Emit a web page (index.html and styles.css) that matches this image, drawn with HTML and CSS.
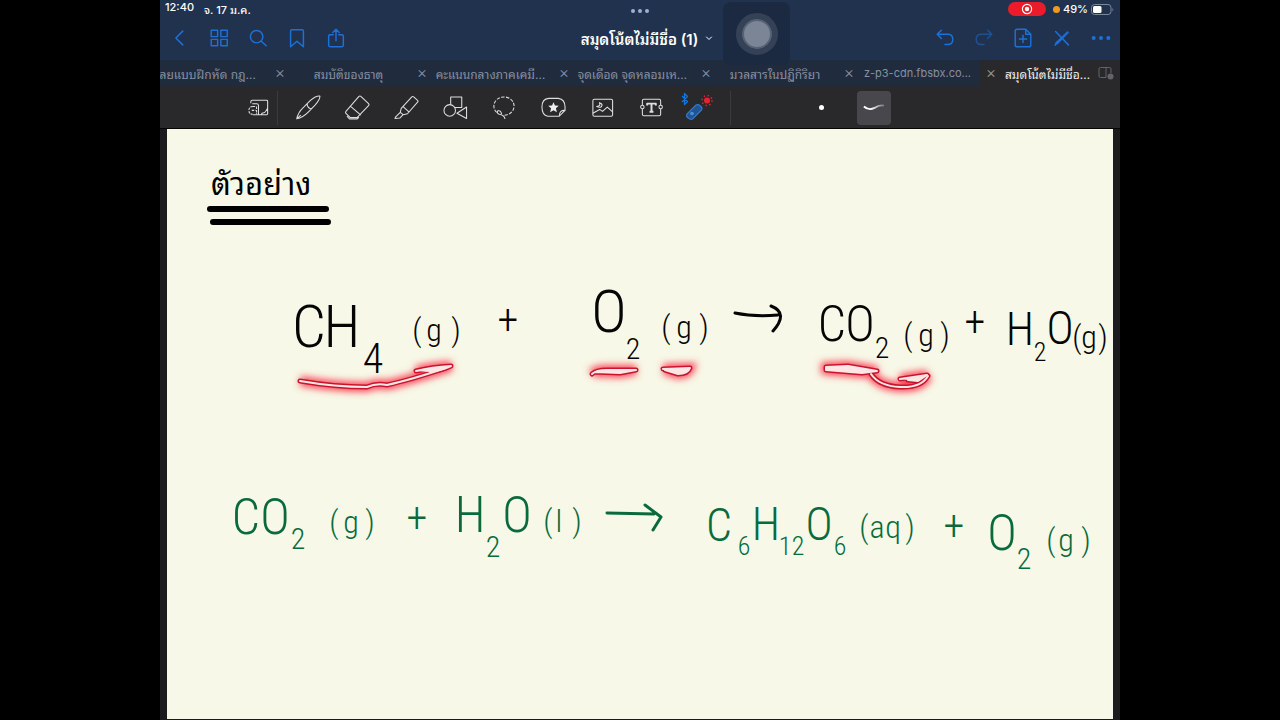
FILE: index.html
```html
<!DOCTYPE html>
<html lang="th">
<head>
<meta charset="utf-8">
<title>สมุดโน้ตไม่มีชื่อ (1)</title>
<link rel="stylesheet" href="styles.css">
</head>
<body>
<div class="app">
  <header class="header">
    <div class="status">
      <div class="status-left"><span>12:40</span><span>จ. 17 ม.ค.</span></div>
      <div class="dots"><i></i><i></i><i></i></div>
      <div class="status-right">
        <span class="rec"><svg width="12" height="12" viewBox="0 0 12 12"><circle cx="6" cy="6" r="4.6" fill="none" stroke="#fff" stroke-width="1.2"/><circle cx="6" cy="6" r="2.2" fill="#fff"/></svg></span>
        <span class="mic"></span><span>49%</span>
        <svg width="23" height="11" viewBox="0 0 23 11"><rect x=".5" y=".5" width="19.5" height="10" rx="3" fill="none" stroke="#7d8797"/><rect x="2" y="2" width="8.5" height="7" rx="1.5" fill="#fff"/><path d="M21.5 3.5q1.5 2 0 4z" fill="#7d8797"/></svg>
      </div>
    </div>
    <nav class="nav">
      <div class="group">
        <button aria-label="Back"><svg viewBox="0 0 24 24"><path d="M15 4.500L7.500 12l7.500 7.500"/></svg></button>
        <button aria-label="Pages"><svg viewBox="0 0 24 24"><path d="M3.500 3.500h7v7h-7zM14 3.500h7v7h-7zM3.500 13.500h7v7h-7zM14 13.500h7v7h-7z"/></svg></button>
        <button aria-label="Search"><svg viewBox="0 0 24 24"><circle cx="10.500" cy="10.500" r="6.800"/><path d="M15.500 15.500l5.500 5"/></svg></button>
        <button aria-label="Bookmark"><svg viewBox="0 0 24 24"><path d="M5 4.500q0-1.500 1.500-1.500h11q1.500 0 1.500 1.500V21.500L12 15.500 5 21.500z"/></svg></button>
        <button aria-label="Share"><svg viewBox="0 0 24 24"><path d="M9 8.500H5.500q-1.500 0-1.500 1.500v10q0 1.500 1.500 1.500h13q1.500 0 1.500-1.500V10q0-1.500-1.500-1.500H15M12 15V2.500M8.500 6L12 2.500 15.500 6"/></svg></button>
      </div>
      <button class="title">สมุดโน้ตไม่มีชื่อ (1)<svg viewBox="0 0 8 8"><path d="M1.500 3L4 5.500 6.500 3"/></svg></button>
      <div class="group right">
        <button aria-label="Undo"><svg viewBox="0 0 24 24"><path d="M8 3.500L3.500 8 8 12.500M3.500 8H15q5.500 0 5.500 5.500T15 19h-3"/></svg></button>
        <button aria-label="Redo" class="dim"><svg viewBox="0 0 24 24"><path d="M16 3.500L20.500 8 16 12.500M20.500 8H9q-5.500 0-5.500 5.500T9 19h3"/></svg></button>
        <button aria-label="Add page"><svg viewBox="0 0 24 24"><path d="M5.500 2.500H15l5.500 5.500v11.500q0 2-2 2h-13q-2 0-2-2v-15q0-2 2-2zM15 2.500V8h5.500M12 9v8M8 13h8"/></svg></button>
        <button aria-label="Pen off"><svg viewBox="0 0 24 24"><path d="M5 5l14 14.500M4.500 20l1.500-3.500"/><path d="M5 19.500l1.500-4L18 4.500l1.500 1.500L8 18z" fill="#1d70d6" stroke-width="0.300"/></svg></button>
        <button aria-label="More"><svg viewBox="0 0 24 24"><g fill="#1d70d6" stroke="none"><circle cx="4" cy="12" r="2.200"/><circle cx="12" cy="12" r="2.200"/><circle cx="20" cy="12" r="2.200"/></g></svg></button>
      </div>
    </nav>
    <div class="touch"><span></span></div>
  </header>

  <div class="tabs">
    <div class="tab first"><span>ลยแบบฝึกหัด กฎ…</span></div>
    <div class="tab"><button aria-label="Close">×</button><span>สมบัติของธาตุ</span></div>
    <div class="tab"><button aria-label="Close">×</button><span>คะแนนกลางภาคเคมี…</span></div>
    <div class="tab"><button aria-label="Close">×</button><span>จุดเดือด จุดหลอมเห…</span></div>
    <div class="tab"><button aria-label="Close">×</button><span>มวลสารในปฏิกิริยา</span></div>
    <div class="tab"><button aria-label="Close">×</button><span class="latin">z-p3-cdn.fbsbx.co...</span></div>
    <div class="tab active"><button aria-label="Close">×</button><span>สมุดโน้ตไม่มีชื่อ…</span>
      <svg class="split" width="16" height="14" viewBox="0 0 16 14"><path d="M8 11.500H2.500q-1.500 0-1.500-1.500V3q0-1.500 1.500-1.500h9Q13 1.500 13 3v4M8 1.500v10" fill="none" stroke="#646468"/><circle cx="12.500" cy="10.500" r="3" fill="#646468"/></svg></div>
  </div>

  <div class="tools">
    <button class="zoom" aria-label="Zoom"><svg viewBox="0 0 26 26"><path d="M5 8.500V7q0-1.500 1.500-1.500h15q1 0 1 1v13q0 1-1 1H7M6.500 9H11q2 0 2 2v9.500M15.500 20.500q1-2 3-2 1.500 0 4-5"/><path d="M7 12q-4 0-4 4t4 4M7 12h3q1 0 1 1v7M6 16h4" stroke-dasharray="2.500 1"/></svg></button>
    <button aria-label="Pen"><svg viewBox="0 0 26 26"><path d="M.8 24.800Q2 18 8 12.500L15 5.500Q21 .5 24.800 1q.5 3.500-5 9.500L13 17.500Q7 23.500.8 24.800zM11.500 9.500q.5 4.500 5 5M.8 24.800L5 21"/></svg></button>
    <button aria-label="Eraser"><svg viewBox="0 0 26 26"><path d="M14.500 1.500q1-1 2 0l8 7.500q1 1 0 2L12.500 23.500H5.500L1 19q-1-1 0-2zM5.500 11.500l11 9.500M2 22l3 3h7.500l2-2"/></svg></button>
    <button aria-label="Highlighter"><svg viewBox="0 0 26 26"><path d="M7.500 14L18.500 2q1-1 2 0l4 3.500q1 1 0 2L14 19.500l-4.500 1-3-2.500zM9.500 12l6 5.500M6.500 18L1.500 23l-.5 1.500 5-.5 3.500-3.500"/></svg></button>
    <button aria-label="Shapes"><svg viewBox="0 0 26 26"><rect x="8" y="2" width="11.500" height="11"/><circle cx="7" cy="16" r="6" fill="#29292b"/><path d="M24.500 12.500v12L14.500 19z" fill="#29292b"/></svg></button>
    <button aria-label="Lasso"><svg viewBox="0 0 26 26"><path d="M13 21A10.500 9.500 0 1 0 6 19" stroke-dasharray="3.500 1.500"/><path d="M13.500 25q-.5-4-6-5-3-1.500-1.500-3.500 3-1 4 3.500"/></svg></button>
    <button aria-label="Elements"><svg viewBox="0 0 26 26"><path d="M19 22H7Q1 21 1 12.500T8 3.500h10q7 1 7 9V16q-6-.5-6 6l6-6"/><path d="M13 7.500l1.500 3.500 4 .3-3 2.600 1 4-3.500-2.100-3.500 2.100 1-4-3-2.600 4-.3z" fill="#eee" stroke="none"/></svg></button>
    <button aria-label="Image"><svg viewBox="0 0 26 26"><rect x="3" y="4.500" width="20.500" height="17.500" rx="1.500"/><path d="M3 19l7-4 3 2 5-4.500 5.500 5M9.500 8q2.500 3-2.500 4 5 2 5.500-1.500 0-2-3-2.500"/></svg></button>
    <button aria-label="Text"><svg viewBox="0 0 26 26"><path d="M3.500 10.500V6q0-1.500 1.500-1.500h16q1.500 0 1.500 1.500v4.500m0 4V20q0 1.500-1.500 1.500H5q-1.500 0-1.500-1.500v-5.500"/><circle cx="3.500" cy="12.500" r="1.800"/><circle cx="22.500" cy="12.500" r="1.800"/><path d="M8.500 11V9h9v2M13 9v8.500M11 17.500h4" stroke-width="2"/></svg></button>
    <button class="laser" aria-label="Laser pointer"><svg viewBox="0 0 36 32"><path d="M3 4l5.500 5.500-3 3v-11l3 3-5.500 5.500" stroke="#1772e8" stroke-width="1.300"/><path d="M8 22l9-9q2-1 4.500 1t1 4l-9 9q-2 1-4.500-1t-1-4z" fill="#205493" stroke="#3579c6"/><circle cx="13" cy="21.500" r="1.800" fill="#4a90e0" stroke="none"/><circle cx="28" cy="8.500" r="3" fill="#e6222d" stroke="none"/><circle cx="28" cy="8.500" r="5" stroke="#e6222d" stroke-width="1.600" stroke-dasharray="1.300 2.630"/></svg></button>
    <button class="dot" aria-label="Point"><i></i></button>
    <button class="trail" aria-label="Trail"><svg viewBox="0 0 26 26"><defs><linearGradient id="fade"><stop offset=".35" stop-color="#fff"/><stop offset="1" stop-color="#77777b"/></linearGradient></defs><path d="M2 12q5 4.500 11 1.500 5-3.500 10-2.500" stroke="url(#fade)" stroke-width="2"/></svg></button>
  </div>

  <main class="desk">
    <svg class="page" viewBox="167 129 946 590" role="img" aria-label="ตัวอย่าง">
      <defs><filter id="glow" x="-20%" y="-150%" width="140%" height="400%"><feGaussianBlur stdDeviation="3.500"/></filter>
      <g id="marks">
        <path d="M300 381Q335 387 367 387 376 383 387 385 410 380 446 368"/>
        <path class="blob" d="M416 371Q432 367 451 366 445 369 430 372"/>
        <path class="blob" d="M592 374Q596 370 607 370L636 370 620 373 595 372"/>
        <path class="blob" d="M663 369L690 368Q688 374 678 374L665 370"/>
        <path class="blob" d="M826 367L848 366 877 371 862 373 826 370z"/>
        <path d="M871 374Q879 386 900 387T928 376"/>
        <path class="blob" d="M900 379L927 375 918 381 908 380"/>
      </g></defs>
      <text class="heading" x="211" y="195">ตัวอย่าง</text>
      <path class="rule" d="M210 209H326M213 222H328"/>
      <g class="glow" filter="url(#glow)"><use href="#marks"/></g>
      <use href="#marks" class="edge"/><use href="#marks" class="core"/>
      <g class="black">
        <text><tspan class="cap big" x="309 342" y="347">CH</tspan><tspan class="sub big-sub" x="373" y="373">4</tspan><tspan class="state" x="417 434 456" y="341">(g)</tspan><tspan class="plus" x="508" y="334">+</tspan></text>
        <text><tspan class="cap big" x="609" y="332">O</tspan><tspan class="sub" x="633" y="359">2</tspan><tspan class="state" x="666 684 704" y="338">(g)</tspan></text>
        <path d="M735 313Q754 317 778 315M771 306Q789 313 773 331"/>
        <text><tspan class="cap" x="832 860" y="341">CO</tspan><tspan class="sub" x="882" y="358">2</tspan><tspan class="state" x="908 926 945" y="346">(g)</tspan><tspan class="plus" x="975" y="336">+</tspan></text>
        <text><tspan class="cap tight" x="1020" y="345">H</tspan><tspan class="sub small" x="1040" y="361">2</tspan><tspan class="cap tight" x="1060" y="344">O</tspan><tspan class="state" x="1077 1089 1103" y="348">(g)</tspan></text>
      </g>
      <g class="green">
        <text><tspan class="cap" x="246 275" y="534">CO</tspan><tspan class="sub" x="298" y="549">2</tspan><tspan class="state" x="334 351 370" y="533">(g)</tspan><tspan class="plus" x="417" y="532">+</tspan></text>
        <text><tspan class="cap" x="470" y="532">H</tspan><tspan class="sub" x="493" y="557">2</tspan><tspan class="cap" x="517" y="532">O</tspan><tspan class="state" x="548 559 577" y="532">(l)</tspan></text>
        <path d="M607 513L654 514M645 505L661 517 653 530"/>
        <text><tspan class="cap tight" x="719" y="541">C</tspan><tspan class="sub small" x="744" y="555">6</tspan><tspan class="cap tight" x="766" y="540">H</tspan><tspan class="sub small" x="785 798" y="555">12</tspan><tspan class="cap tight" x="819" y="540">O</tspan><tspan class="sub small" x="840" y="555">6</tspan><tspan class="state" x="864 877 893 910" y="538">(aq)</tspan><tspan class="plus" x="954" y="540">+</tspan></text>
        <text><tspan class="cap" x="1002" y="550">O</tspan><tspan class="sub" x="1024" y="569">2</tspan><tspan class="state" x="1051 1066 1086" y="551">(g)</tspan></text>
      </g>
    </svg>
  </main>
</div>
</body>
</html>
```
FILE: styles.css
```css
* { box-sizing: border-box; }
body { margin: 0; background: #000; font-family: Inter, "Noto Sans Thai Looped", Loma, Garuda, Waree, "Noto Sans Thai", "Noto Sans", sans-serif; color: #fff; }
button { background: none; border: 0; padding: 0; margin: 0; font: inherit; color: inherit; display: flex; align-items: center; justify-content: center; }
svg { flex: none; }
.app { width: 75%; min-height: 100vh; margin: 0 auto; background: #1b1b1e; overflow: hidden; }
.header { position: relative; background: #21324f; }
.status { display: grid; grid-template-columns: 1fr auto 1fr; align-items: center; height: 18px; padding: 0 6px 0 5px; font-size: 11px; font-weight: 500; }
.status-left { display: flex; gap: 10px; }
.status-right { display: flex; justify-content: flex-end; align-items: center; gap: 3px; }
.rec { display: flex; align-items: center; justify-content: center; width: 38px; height: 14px; border-radius: 7px; background: #ea1c2b; margin-right: 4px; }
.mic { width: 7px; height: 7px; border-radius: 50%; background: #f09a1d; }
.dots { display: flex; gap: 3px; padding-top: 4px; }
.dots i { width: 4px; height: 4px; border-radius: 50%; background: #9eb0cd; }
.nav { display: grid; grid-template-columns: 1fr auto 1fr; align-items: center; height: 42px; padding-bottom: 3px; }
.group { display: flex; }
.group.right { justify-content: flex-end; }
.group button { width: 39px; height: 36px; }
.nav svg { width: 22px; height: 22px; fill: none; stroke: #1d70d6; stroke-width: 1.6; stroke-linejoin: round; stroke-linecap: round; }
.dim { opacity: .5; }
.nav .title { gap: 7px; padding-left: 14px; font-size: 15px; font-weight: 600; white-space: nowrap; }
.nav .title svg { width: 8px; height: 8px; stroke: #fff; stroke-width: 1; }
.touch { position: absolute; top: 2px; left: 563px; width: 67px; height: 63px; border-radius: 8px; background: #1c2a41; display: flex; align-items: center; justify-content: center; z-index: 1; }
.touch span { width: 42px; height: 42px; border-radius: 50%; border: 6px solid #344157; background: #7b8596; background-clip: padding-box; box-shadow: inset 0 0 0 2px #556175; }
.tabs { display: grid; grid-template-columns: 109fr 142fr 142fr 142fr 143fr 142fr 140fr; height: 26px; background: #202b3e; color: #8690a1; font-size: 12px; }
.tab { position: relative; display: flex; align-items: center; padding-left: 5px; overflow: hidden; white-space: nowrap; }
.tab span { flex: 1; text-align: center; }
.tab .latin { font-size: 11px; }
.tab button { width: 12px; height: 16px; font-size: 16px; font-weight: 300; padding-bottom: 2px; }
.tab.first { padding: 0; justify-content: flex-end; padding-right: 13px; }
.tab.first span { flex: none; }
.tab.active { background: #29292b; color: #f2f2f2; padding-right: 6px; }
.tab.active button { color: #999; }
.tools { display: flex; align-items: center; height: 43px; padding: 1px 0 0 80px; background: #29292b; border-bottom: 1px solid #050505; }
.tools button { width: 49px; height: 34px; }
.tools svg { width: 25px; height: 25px; fill: none; stroke: #dededf; stroke-width: 1.1; stroke-linejoin: round; }
.tools .zoom { width: 38px; margin-right: 6px; border-right: 1px solid #3b3b3e; }
.tools .laser { width: 55px; padding-right: 12px; border-right: 1px solid #3b3b3e; }
.tools .laser svg { width: 36px; height: 32px; }
.tools .dot { margin-left: 66px; }
.tools .dot i { width: 5px; height: 5px; border-radius: 50%; background: #fff; }
.tools .trail { width: 34px; margin-left: 11px; border-radius: 4px; background: #48484c; }
.desk { padding: 0 7px; }
.page { display: block; width: 100%; background: #f7f8e7; overflow: hidden; }
.page text { font-family: "Roboto Condensed", Roboto, "Liberation Sans Narrow", sans-serif; font-weight: 300; text-anchor: middle; }
.page .heading { font-family: "Noto Sans Thai Looped", Loma, Garuda, Waree, "Noto Sans Thai", sans-serif; font-size: 31px; font-weight: 400; text-anchor: start; }
.rule { stroke: #000; stroke-width: 6; stroke-linecap: round; }
.cap { font-size: 50px; }
.cap.big { font-size: 60px; }
.cap.tight { font-size: 46px; }
.sub { font-size: 30px; }
.sub.big-sub { font-size: 42px; }
.sub.small { font-size: 26px; }
.state { font-size: 32px; }
.plus { font-size: 42px; }
.black { fill: #050505; }
.green { fill: #096b3c; }
.black path, .green path { fill: none; stroke-width: 3; stroke-linecap: round; stroke-linejoin: round; }
.black path { stroke: #050505; }
.green path { stroke: #096b3c; }
.blob { fill: #ffe6e6; }
.glow { fill: none; stroke: #f9485c; stroke-width: 10; }
.edge { fill: none; stroke: #c9152c; stroke-width: 5; stroke-linecap: round; stroke-linejoin: round; }
.core { fill: none; stroke: #ffe6e6; stroke-width: 2; stroke-linecap: round; stroke-linejoin: round; }
```
